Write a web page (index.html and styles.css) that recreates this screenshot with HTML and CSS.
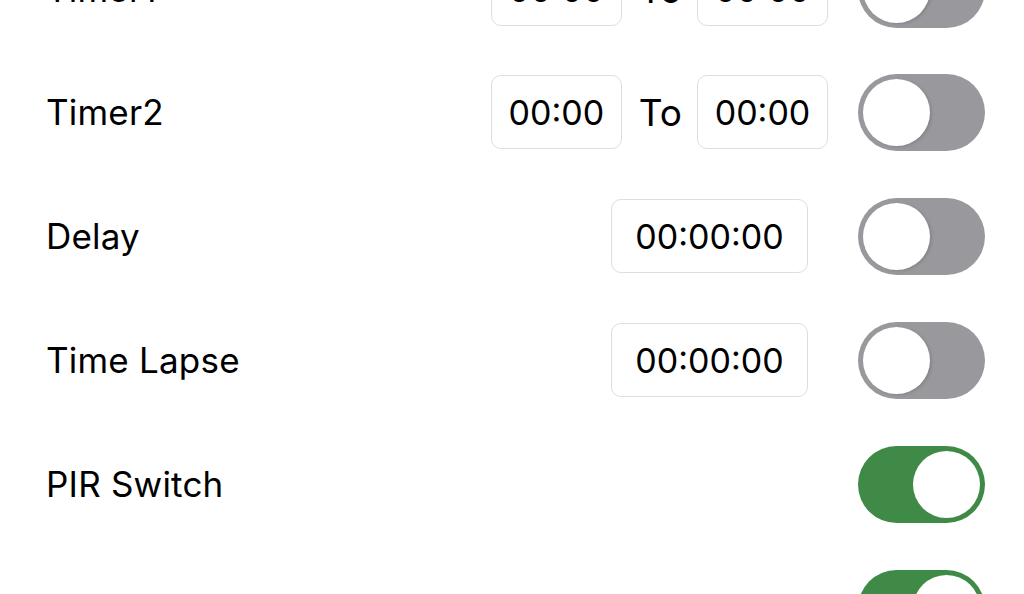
FILE: index.html
```html
<!DOCTYPE html>
<html>
<head>
<meta charset="utf-8">
<link rel="stylesheet" href="styles.css">
</head>
<body>
<div class="list">
  <div class="row first">
    <span class="label">Timer1</span>
    <div class="controls">
      <span class="box short">00:00</span>
      <span class="to">To</span>
      <span class="box short">00:00</span>
    </div>
    <span class="toggle"><span class="knob"></span></span>
  </div>
  <div class="row">
    <span class="label">Timer2</span>
    <div class="controls">
      <span class="box short">00:00</span>
      <span class="to">To</span>
      <span class="box short">00:00</span>
    </div>
    <span class="toggle"><span class="knob"></span></span>
  </div>
  <div class="row">
    <span class="label">Delay</span>
    <div class="controls single">
      <span class="box long">00:00:00</span>
    </div>
    <span class="toggle"><span class="knob"></span></span>
  </div>
  <div class="row">
    <span class="label">Time Lapse</span>
    <div class="controls single">
      <span class="box long">00:00:00</span>
    </div>
    <span class="toggle"><span class="knob"></span></span>
  </div>
  <div class="row">
    <span class="label">PIR Switch</span>
    <div class="controls"></div>
    <span class="toggle on"><span class="knob"></span></span>
  </div>
  <div class="row">
    <span class="label">Motion</span>
    <div class="controls"></div>
    <span class="toggle on"><span class="knob"></span></span>
  </div>
</div>
</body>
</html>
```

FILE: styles.css
```css
html, body {
  margin: 0;
  padding: 0;
  background: #ffffff;
  overflow: hidden;
}
body {
  font-family: "Inter", "Liberation Sans", sans-serif;
  color: #000;
  width: 1024px;
  height: 594px;
}
.list {
  margin-top: -72px;
  display: flex;
  flex-direction: column;
}
.row {
  height: 124px;
  flex: none;
  display: flex;
  align-items: center;
  padding: 0 39px 0 46px;
}
.row.first {
  height: 122px;
}
.label {
  font-size: 35px;
  flex: 1;
  letter-spacing: 0.2px;
}
.controls {
  display: flex;
  align-items: center;
}
.controls.single {
  margin-right: 20px;
}
.box {
  box-sizing: border-box;
  height: 74px;
  border: 1px solid #dedede;
  border-radius: 10px;
  display: flex;
  align-items: center;
  justify-content: center;
  font-size: 34px;
  background: #fff;
}
.box.short { width: 131px; }
.box.long { width: 197px; }
.to {
  font-size: 37px;
  margin: 0 15px 0 17px;
}
.toggle {
  margin-left: 30px;
  width: 127px;
  height: 77px;
  border-radius: 39px;
  background: #99989d;
  display: flex;
  align-items: center;
  padding: 0 5px;
  box-sizing: border-box;
}
.knob {
  width: 67px;
  height: 67px;
  border-radius: 50%;
  background: #fff;
  box-shadow: 2px 1px 3px rgba(0,0,0,0.12);
}
.toggle.on {
  background: #3f8a46;
  justify-content: flex-end;
}
.toggle.on .knob {
  box-shadow: none;
}
```
